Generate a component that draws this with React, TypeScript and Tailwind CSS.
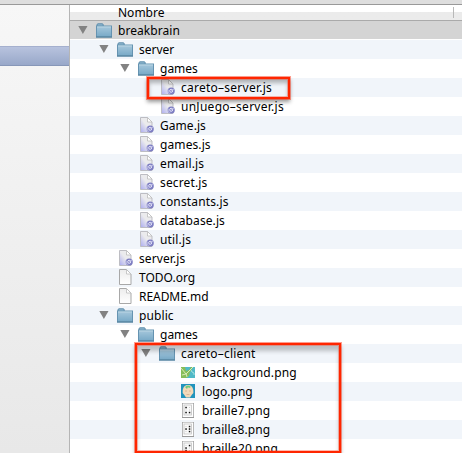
import React from "react";

type Kind = "folder" | "js" | "doc" | "map" | "face" | "b7" | "b8" | "b20";
type Item = { name: string; depth: number; kind: Kind; track: string };

const items: Item[] = [
  { name: "breakbrain", depth: 0, kind: "folder", track: "tracking-[0.05px]" },
  { name: "server", depth: 1, kind: "folder", track: "tracking-[0px]" },
  { name: "games", depth: 2, kind: "folder", track: "tracking-[0px]" },
  { name: "careto–server.js", depth: 3, kind: "js", track: "tracking-[0.25px]" },
  { name: "unJuego–server.js", depth: 3, kind: "js", track: "tracking-[0.27px]" },
  { name: "Game.js", depth: 2, kind: "js", track: "tracking-[0.05px]" },
  { name: "games.js", depth: 2, kind: "js", track: "tracking-[0.1px]" },
  { name: "email.js", depth: 2, kind: "js", track: "tracking-[0.15px]" },
  { name: "secret.js", depth: 2, kind: "js", track: "tracking-[0.15px]" },
  { name: "constants.js", depth: 2, kind: "js", track: "tracking-[0.15px]" },
  { name: "database.js", depth: 2, kind: "js", track: "tracking-[0.1px]" },
  { name: "util.js", depth: 2, kind: "js", track: "tracking-[0.15px]" },
  { name: "server.js", depth: 1, kind: "js", track: "tracking-[0.1px]" },
  { name: "TODO.org", depth: 1, kind: "doc", track: "tracking-[0px]" },
  { name: "README.md", depth: 1, kind: "doc", track: "tracking-[-0.05px]" },
  { name: "public", depth: 1, kind: "folder", track: "tracking-[0.1px]" },
  { name: "games", depth: 2, kind: "folder", track: "tracking-[0px]" },
  { name: "careto–client", depth: 3, kind: "folder", track: "tracking-[0.2px]" },
  { name: "background.png", depth: 4, kind: "map", track: "tracking-[0.1px]" },
  { name: "logo.png", depth: 4, kind: "face", track: "tracking-[0.05px]" },
  { name: "braille7.png", depth: 4, kind: "b7", track: "tracking-[0.1px]" },
  { name: "braille8.png", depth: 4, kind: "b8", track: "tracking-[0.1px]" },
  { name: "braille20.png", depth: 4, kind: "b20", track: "tracking-[0.15px]" },
];

const indents = ["pl-[8px]", "pl-[29px]", "pl-[50px]", "pl-[71px]", "pl-[92px]"];

const dots: Record<string, number[][]> = {
  b7: [[6.5, 6], [6.5, 11], [10, 11]],
  b8: [[10, 6], [6.5, 8.5], [10, 8.5], [10, 11]],
  b20: [[10, 6], [6.5, 8.5], [6.5, 11]],
};

function Folder() {
  return (
    <svg width="18" height="19" viewBox="0 0 18 19">
      <path d="M2 5V4q0-1.2 1-1.2h4.2q1 0 1 1V5" fill="#8db6ce" stroke="#5e8dac" />
      <rect x="1.5" y="5" width="15" height="11" fill="url(#folderFill)" stroke="#6593b1" />
      <path d="M2 6h14" stroke="#b9d4e3" />
      <path d="M1 16h16" stroke="#517e99" />
    </svg>
  );
}

function Doc({ js }: { js: boolean }) {
  return (
    <svg width="18" height="19" viewBox="0 0 18 19">
      <path d="M3.5 1.5h7l4.5 4.5v10.5h-11.5z" fill={js ? "url(#jsFill)" : "url(#docFill)"} stroke={js ? "#bdbdc3" : "#a8a8a8"} />
      <path d="M10.5 1.5v4.5h4.5z" fill="#fff" stroke="#bcbcbc" strokeWidth=".8" />
      {js && (
        <g>
          <circle cx="13.2" cy="13" r="3.6" fill="#7d7dc2" />
          <circle cx="13.2" cy="12.8" r="1.5" fill="none" stroke="#e8e8fb" strokeWidth="1" />
          <path d="M13.2 12.8l3-2M10.2 11.5v3l2 1" stroke="#cdcdee" fill="none" strokeWidth=".8" />
        </g>
      )}
    </svg>
  );
}

function Icon({ kind }: { kind: Kind }) {
  if (kind === "folder") return <Folder />;
  if (kind === "js" || kind === "doc") return <Doc js={kind === "js"} />;
  if (kind === "map")
    return (
      <svg width="18" height="19" viewBox="0 0 18 19">
        <rect x="2" y="4" width="14" height="11" fill="#50b9c7" />
        <path d="M2 4h4l1 4 3-1 2-3h2l-3 5-1 4-3 2H2z" fill="#86bd59" />
        <path d="M2 5l5 6 3-3 4-4M7 10l1 4M3 12l4-1" stroke="#d9eab6" fill="none" />
        <path d="M12 7l1 2 2 1v2" stroke="#a8e2df" fill="none" />
      </svg>
    );
  if (kind === "face")
    return (
      <svg width="18" height="19" viewBox="0 0 18 19">
        <rect x="2" y="2" width="14" height="14" fill="#2194bd" />
        <path d="M3.7 8q1-5 5.3-5t5.3 5q.8 3-1.3 4.5L11 15.5H7l-2-3q-2-1.500-1.300-4.500" fill="#f3d9b9" />
        <path d="M6 5q3-3 6 0l-2 1-1-1-1 2z" fill="#69cb7c" />
        <path d="M6 9h2m2 0h2M7.5 12.500h3" stroke="#d3ad8e" strokeWidth=".8" />
      </svg>
    );
  return (
    <svg width="18" height="19" viewBox="0 0 18 19">
      <rect x="3" y="2" width="12" height="15" fill="#999" />
      <rect x="3.7" y="2.500" width="10.600" height="13.500" fill="#fff" />
      <rect x="5" y="4" width="7.500" height="10" fill="#fafafa" stroke="#c2c2c2" strokeWidth=".8" />
      {[6, 8.5, 11].map((y) => [6.5, 10].map((x) => <rect key={`${x}${y}`} x={x} y={y} width="1" height="1" fill="#ccc" />))}
      {dots[kind].map(([x, y]) => <rect key={`${x}-${y}`} x={x - 0.2} y={y - 0.2} width="1.5" height="1.5" fill="#111" />)}
    </svg>
  );
}

function Row({ item, index }: { item: Item; index: number }) {
  const bg = index === 0 ? "bg-[#d4d4d4] border-b border-white" : index % 2 ? "bg-[#f1f5fa]" : "bg-white";
  return (
    <div className={`flex h-[19px] shrink-0 items-start ${bg} ${indents[item.depth]}`}>
      <svg className="mr-[7px] shrink-0" width="10" height="19" viewBox="0 0 10 19">
        {item.kind === "folder" && <path d="M.3 5h9.2L4.9 13z" fill="#828282" />}
      </svg>
      <span className="mr-[5px] h-[19px] w-[18px] shrink-0"><Icon kind={item.kind} /></span>
      <span className={`whitespace-nowrap leading-[19px] ${item.track}`}>{item.name}</span>
    </div>
  );
}

export default function App() {
  return (
    <div className="relative flex h-[453px] w-[462px] flex-col overflow-hidden bg-white font-['Noto_Sans',sans-serif] text-[12px] text-black">
      <svg className="absolute" width="0" height="0">
        <defs>
          <linearGradient id="folderFill" x2="0" y2="1"><stop stopColor="#a7c8dc" /><stop offset="1" stopColor="#76a8c6" /></linearGradient>
          <linearGradient id="docFill" x2="0" y2="1"><stop stopColor="#ececec" /><stop offset="1" stopColor="#fff" /></linearGradient>
          <linearGradient id="jsFill" x1="1" y1="0" x2="0" y2="1"><stop offset=".5" stopColor="#ebebed" /><stop offset="1" stopColor="#aaaaf0" /></linearGradient>
        </defs>
      </svg>
      <div className="h-[5px] shrink-0 border-b border-[#999] bg-[#dedede]" />
      <div className="flex min-h-0 flex-1">
        <aside className="w-[70px] shrink-0 border-r border-[#b5b5b5] bg-linear-to-b from-[#f7f7f7] to-[#e8e8e8] pt-[41px]">
          <div className="h-[20px] border-t border-b border-t-[#a5b0ce] border-b-[#8797b8] bg-linear-to-b from-[#b8c3de] to-[#98a8c9]" />
        </aside>
        <main className="flex min-w-0 flex-1 flex-col overflow-hidden">
          <header className="flex h-[16px] shrink-0 items-center justify-between border-b border-[#aaa] bg-linear-to-b from-white from-50% to-[#ebebeb] to-50% pl-[48px] pr-[8px]">
            <span className="leading-[15px]">Nombre</span>
            <span className="h-[11px] w-px bg-[#b8b8b8]" />
          </header>
          {items.map((item, i) => <Row key={i} item={item} index={i} />)}
        </main>
      </div>
      <div className="absolute left-[147px] top-[77px] h-[22px] w-[143px] border-2 border-[#ff2600] shadow-[0_0_0_1px_rgba(255,60,30,.5),0_3px_4px_rgba(0,0,0,.4),inset_0_0_0_1px_rgba(255,60,30,.35),inset_0_4px_4px_rgba(0,0,0,.28)]" />
      <div className="absolute left-[135px] top-[343px] h-[110px] w-[206px] border-2 border-[#ff2600] shadow-[0_0_0_1px_rgba(255,60,30,.5),0_3px_4px_rgba(0,0,0,.3),inset_0_0_0_1px_rgba(255,60,30,.35),inset_0_6px_4px_rgba(0,0,0,.22)]" />
    </div>
  );
}
